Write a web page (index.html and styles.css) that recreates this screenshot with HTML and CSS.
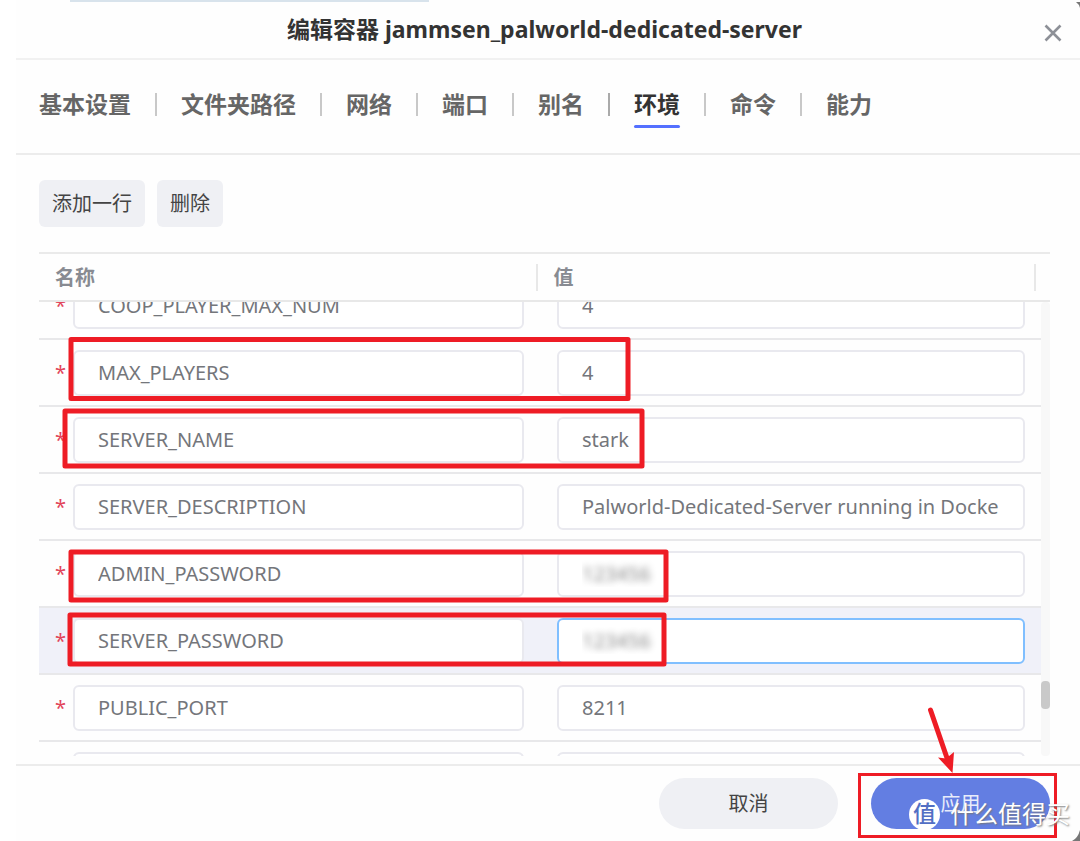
FILE: index.html
```html
<!DOCTYPE html>
<html lang="zh-CN">
<head>
<meta charset="utf-8">
<meta name="viewport" content="width=device-width, initial-scale=1">
<title>编辑容器</title>
<link rel="stylesheet" href="styles.css">
</head>
<body>
<main class="dialog">
  <header class="dialog-header">
    <h1 class="dialog-title">编辑容器 jammsen_palworld-dedicated-server</h1>
    <button class="close" type="button" aria-label="关闭">
      <svg width="20" height="20" viewBox="0 0 20 20"><path d="M2.500 2.500 17.500 17.500M17.500 2.500 2.500 17.500" fill="none" stroke="#8d9097" stroke-width="2.600"/></svg>
    </button>
  </header>
  <nav class="tabs">
    <button class="tab" type="button">基本设置</button>
    <button class="tab" type="button">文件夹路径</button>
    <button class="tab" type="button">网络</button>
    <button class="tab" type="button">端口</button>
    <button class="tab" type="button">别名</button>
    <button class="tab active" type="button">环境</button>
    <button class="tab" type="button">命令</button>
    <button class="tab" type="button">能力</button>
  </nav>
  <section class="content">
    <div class="toolbar">
      <button class="tool" type="button">添加一行</button>
      <button class="tool" type="button">删除</button>
    </div>
    <table class="env">
      <thead>
        <tr class="head-row"><th class="head-cell">名称</th><th class="head-cell">值</th></tr>
      </thead>
      <tbody class="env-body">
        <tr class="row"><td class="name-cell"><span class="req">*</span><input class="field" aria-label="名称" value="COOP_PLAYER_MAX_NUM"></td><td class="value-cell"><input class="field" aria-label="值" value="4"></td></tr>
        <tr class="row"><td class="name-cell"><span class="req">*</span><input class="field" aria-label="名称" value="MAX_PLAYERS"></td><td class="value-cell"><input class="field" aria-label="值" value="4"></td></tr>
        <tr class="row"><td class="name-cell"><span class="req">*</span><input class="field" aria-label="名称" value="SERVER_NAME"></td><td class="value-cell"><input class="field" aria-label="值" value="stark"></td></tr>
        <tr class="row"><td class="name-cell"><span class="req">*</span><input class="field" aria-label="名称" value="SERVER_DESCRIPTION"></td><td class="value-cell"><input class="field" aria-label="值" value="Palworld-Dedicated-Server running in Docke"></td></tr>
        <tr class="row"><td class="name-cell"><span class="req">*</span><input class="field" aria-label="名称" value="ADMIN_PASSWORD"></td><td class="value-cell"><input class="field masked" aria-label="值" value="123456"></td></tr>
        <tr class="row selected"><td class="name-cell"><span class="req">*</span><input class="field" aria-label="名称" value="SERVER_PASSWORD"></td><td class="value-cell"><input class="field masked focused" aria-label="值" value="123456"></td></tr>
        <tr class="row"><td class="name-cell"><span class="req">*</span><input class="field" aria-label="名称" value="PUBLIC_PORT"></td><td class="value-cell"><input class="field" aria-label="值" value="8211"></td></tr>
        <tr class="row"><td class="name-cell"><span class="req"></span><input class="field" aria-label="名称"></td><td class="value-cell"><input class="field" aria-label="值"></td></tr>
      </tbody>
    </table>
    <div class="scroll-track"><div class="scroll-thumb"></div></div>
  </section>
  <footer class="dialog-footer">
    <button class="action" type="button">取消</button>
    <button class="action primary" type="button">应用</button>
  </footer>
</main>
<div class="page-edge"></div>
<svg class="marks" width="1080" height="841" viewBox="0 0 1080 841" aria-hidden="true">
  <path d="M1080 830Q1078 838 1072 841H1080Z" fill="#777"/>
  <path d="M1076 2H1080V8Q1079 4 1076 2Z" fill="#777"/>
  <g fill="none" stroke="#ee1c25" stroke-width="5" stroke-linejoin="round">
    <rect x="71" y="339.500" width="557" height="59"/>
    <rect x="65" y="411" width="577" height="55"/>
    <rect x="71" y="552" width="595" height="48"/>
    <rect x="70" y="615" width="594" height="49"/>
    <rect x="859.500" y="774.500" width="196" height="62" stroke-width="3" stroke-linejoin="miter"/>
    <path d="M930.500 710 947 758" stroke-linecap="round"/>
  </g>
  <path d="M952.500 773 938 757.500 946 758.500 954 752Z" fill="#ee1c25"/>
</svg>
<div class="watermark"><span class="badge">值</span><span>什么值得买</span></div>
</body>
</html>
```
FILE: styles.css
```css
* { box-sizing: border-box; }

body {
  margin: 0;
  position: relative;
  background: #fff;
  color: #333;
  font-family: "Noto Sans", "Noto Sans CJK SC", sans-serif;
  font-size: 20px;
}

button, input { font: inherit; }
button { border: 0; padding: 0; background: none; cursor: pointer; }

.dialog {
  display: flex;
  flex-direction: column;
  height: 100vh;
  margin-left: 16px;
  background: #fefefe;
}

.dialog-header {
  display: flex;
  align-items: center;
  height: 60px;
  padding-right: 17px;
  border-bottom: 2px solid #f1f1f1;
}

.dialog-title {
  flex: 1;
  margin: 0;
  padding-left: 30px;
  text-align: center;
  font-size: 23px;
  font-weight: 700;
  line-height: 56px;
}

.close { display: flex; padding-top: 8px; }

.tabs {
  display: flex;
  align-items: center;
  height: 95px;
  padding: 0 23px 4px;
  border-bottom: 2px solid #ececec;
}

.tab {
  position: relative;
  padding-bottom: 2px;
  color: #666;
  font-size: 23px;
  font-weight: 700;
  line-height: 44px;
  white-space: nowrap;
}

.tab + .tab { margin-left: 50px; }

.tab + .tab::before {
  content: "";
  position: absolute;
  left: -26px;
  top: 11px;
  width: 2px;
  height: 23px;
  background: #c8c8c8;
}

.tab.active { color: #333; }
.tab.active::before { background: #aaa; }

.tab.active::after {
  content: "";
  position: absolute;
  left: 0;
  right: 0;
  bottom: 0;
  height: 3px;
  border-radius: 2px;
  background: #5470ff;
}

.content {
  position: relative;
  display: flex;
  flex: 1;
  flex-direction: column;
  min-height: 0;
  padding: 25px 30px 8px 23px;
}

.toolbar { display: flex; gap: 12px; margin-bottom: 25px; }

.tool {
  height: 47px;
  padding: 0 13px 2px;
  border-radius: 6px;
  background: #eff0f4;
  color: #444;
}

.env {
  display: flex;
  flex: 1;
  flex-direction: column;
  min-height: 0;
}

.head-row {
  display: grid;
  grid-template-columns: 1fr 1fr;
  align-items: center;
  height: 50px;
  padding-right: 14px;
  border-top: 2px solid #eaeaea;
  border-bottom: 2px solid #e8e8e8;
}

.head-cell {
  padding: 0 16px;
  border-right: 2px solid #e8e8e8;
  color: #888b92;
  font-weight: 600;
  line-height: 27px;
  text-align: left;
}

.env-body {
  display: block;
  flex: 1;
  min-height: 0;
  margin-right: 9px;
  overflow: hidden;
}

.row {
  display: grid;
  grid-template-columns: 498fr 504fr;
  height: 67px;
  border-bottom: 2px solid #e8e8ea;
}

.row:first-child { margin-top: -29px; }
.row.selected { background: #f0f1f9; }

.name-cell, .value-cell { display: flex; padding: 10px 16px 9px; }
.name-cell { padding-right: 13px; }
.value-cell { padding-left: 20px; }
.req { width: 18px; color: #e2455a; line-height: 46px; }

.field {
  flex: 1;
  min-width: 0;
  height: 46px;
  padding: 0 23px 2px;
  border: 2px solid #e9e9ef;
  border-radius: 6px;
  outline: 0;
  background: #fff;
  color: #74767b;
}

.focused { border-color: #80bfff; }
.masked { color: transparent; text-shadow: 0 0 7px #888; }

.scroll-track {
  position: absolute;
  top: 147px;
  right: 30px;
  bottom: 8px;
  width: 9px;
  border-radius: 4px;
  background: #f8f8f8;
}

.scroll-thumb {
  position: absolute;
  bottom: 47px;
  width: 9px;
  height: 28px;
  border-radius: 4px;
  background: #c9c9c9;
}

.dialog-footer {
  display: flex;
  justify-content: flex-end;
  gap: 33px;
  height: 77px;
  padding: 12px 30px;
  border-top: 2px solid #ececec;
}

.action {
  width: 179px;
  height: 51px;
  padding-bottom: 2px;
  border-radius: 26px;
  background: #eff0f4;
  color: #444;
}

.primary { background: #637ee2; color: #e8ecfb; }

.page-edge {
  position: absolute;
  top: 0;
  left: 70px;
  width: 359px;
  height: 2px;
  background: #d8e3ec;
}

.marks { position: absolute; top: 0; left: 0; pointer-events: none; }

.watermark {
  position: absolute;
  right: 10px;
  bottom: 10px;
  display: flex;
  align-items: center;
  gap: 10px;
  color: #fff;
  font-size: 24px;
  line-height: 34px;
  text-shadow: 1px 1px 2px #777;
  pointer-events: none;
}

.badge {
  width: 31px;
  height: 31px;
  border-radius: 50%;
  background: #fff;
  color: #526fc4;
  font-size: 23px;
  font-weight: 500;
  line-height: 29px;
  text-align: center;
  text-shadow: none;
}
```
